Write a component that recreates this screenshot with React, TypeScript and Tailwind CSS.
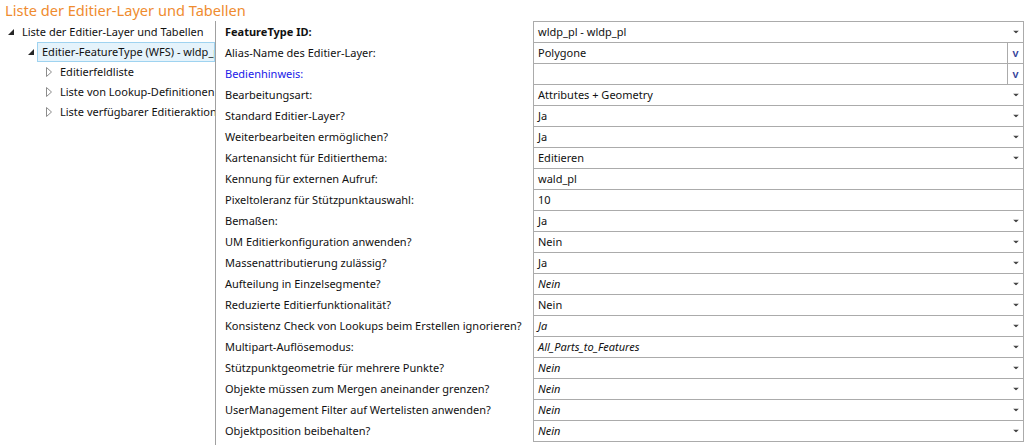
import React from 'react';

type Row = {
  label: string;
  value: string;
  kind: 'select' | 'text' | 'button';
  bold?: boolean;
  blue?: boolean;
  italic?: boolean;
};

const rows: Row[] = [
  { label: 'FeatureType ID:', value: 'wldp_pl - wldp_pl', kind: 'select', bold: true },
  { label: 'Alias-Name des Editier-Layer:', value: 'Polygone', kind: 'button' },
  { label: 'Bedienhinweis:', value: '', kind: 'button', blue: true },
  { label: 'Bearbeitungsart:', value: 'Attributes + Geometry', kind: 'select' },
  { label: 'Standard Editier-Layer?', value: 'Ja', kind: 'select' },
  { label: 'Weiterbearbeiten ermöglichen?', value: 'Ja', kind: 'select' },
  { label: 'Kartenansicht für Editierthema:', value: 'Editieren', kind: 'select' },
  { label: 'Kennung für externen Aufruf:', value: 'wald_pl', kind: 'text' },
  { label: 'Pixeltoleranz für Stützpunktauswahl:', value: '10', kind: 'text' },
  { label: 'Bemaßen:', value: 'Ja', kind: 'select' },
  { label: 'UM Editierkonfiguration anwenden?', value: 'Nein', kind: 'select' },
  { label: 'Massenattributierung zulässig?', value: 'Ja', kind: 'select' },
  { label: 'Aufteilung in Einzelsegmente?', value: 'Nein', kind: 'select', italic: true },
  { label: 'Reduzierte Editierfunktionalität?', value: 'Nein', kind: 'select' },
  { label: 'Konsistenz Check von Lookups beim Erstellen ignorieren?', value: 'Ja', kind: 'select', italic: true },
  { label: 'Multipart-Auflösemodus:', value: 'All_Parts_to_Features', kind: 'select', italic: true },
  { label: 'Stützpunktgeometrie für mehrere Punkte?', value: 'Nein', kind: 'select', italic: true },
  { label: 'Objekte müssen zum Mergen aneinander grenzen?', value: 'Nein', kind: 'select', italic: true },
  { label: 'UserManagement Filter auf Wertelisten anwenden?', value: 'Nein', kind: 'select', italic: true },
  { label: 'Objektposition beibehalten?', value: 'Nein', kind: 'select', italic: true },
];

function Expanded() {
  return (
    <svg width="6" height="6" viewBox="0 0 6 6" className="shrink-0">
      <polygon points="6,0 6,6 0,6" fill="#262626" />
    </svg>
  );
}

function Collapsed() {
  return (
    <svg width="6" height="10" viewBox="0 0 6 10" className="shrink-0">
      <polygon points="0.5,0.5 5.5,5 0.5,9.5" fill="none" stroke="#8c8c8c" strokeWidth="1" />
    </svg>
  );
}

function Arrow() {
  return (
    <svg width="6" height="3" viewBox="0 0 6 3" className="absolute right-[4px] top-1/2 -translate-y-1/2">
      <polygon points="0,0 6,0 3,3" fill="#444444" />
    </svg>
  );
}

export default function App() {
  return (
    <div
      className="w-[1027px] h-[445px] bg-white text-[11px] text-[#111111] overflow-hidden"
      style={{ fontFamily: '"Noto Sans", "Open Sans", sans-serif' }}
    >
      <div className="h-[21px] pl-[5px] text-[14.6px] leading-[21px] text-[#ef8c2f]">
        Liste der Editier-Layer und Tabellen
      </div>
      <div className="flex h-[424px]">
        {/* tree */}
        <div className="w-[216px] shrink-0 border-r border-[#a0a0a0] pt-px">
          <div className="flex items-center h-[20px] pl-[8px] gap-[8px]">
            <Expanded />
            <span className="whitespace-nowrap">Liste der Editier-Layer und Tabellen</span>
          </div>
          <div className="flex items-center h-[20px] pl-[28px]">
            <Expanded />
            <div className="ml-[3px] flex-1 h-[20px] flex items-center pl-[4px] bg-[#e5f3fb] border border-[#9fd3f0] overflow-hidden whitespace-nowrap">
              Editier-FeatureType (WFS) - wldp_pl
            </div>
          </div>
          {['Editierfeldliste', 'Liste von Lookup-Definitionen', 'Liste verfügbarer Editieraktionen'].map((t) => (
            <div key={t} className="flex items-center h-[20px] pl-[46px] gap-[8px] overflow-hidden whitespace-nowrap">
              <Collapsed />
              <span>{t}</span>
            </div>
          ))}
        </div>

        {/* properties */}
        <div className="flex-1 pl-[9px]">
          {rows.map((r, i) => (
            <div key={r.label} className={`flex ${i === 0 ? 'h-[22px]' : 'h-[21px]'}`}>
              <div
                className={`w-[308px] flex items-center whitespace-nowrap ${
                  r.bold ? 'font-bold' : ''
                } ${r.blue ? 'text-[#2020e8]' : ''}`}
              >
                {r.label}
              </div>
              <div
                className={`relative w-[491px] flex items-center border-x border-b border-[#ababab] ${
                  i === 0 ? 'border-t' : ''
                }`}
              >
                <span className={`pl-[4px] flex-1 whitespace-nowrap ${r.italic ? 'italic' : ''}`}>{r.value}</span>
                {r.kind === 'select' && <Arrow />}
                {r.kind === 'button' && (
                  <div className="w-[16px] h-full border-l border-[#ababab] flex items-center justify-center text-[#34409a] text-[11px] font-semibold">
                    v
                  </div>
                )}
              </div>
            </div>
          ))}
        </div>
      </div>
    </div>
  );
}
